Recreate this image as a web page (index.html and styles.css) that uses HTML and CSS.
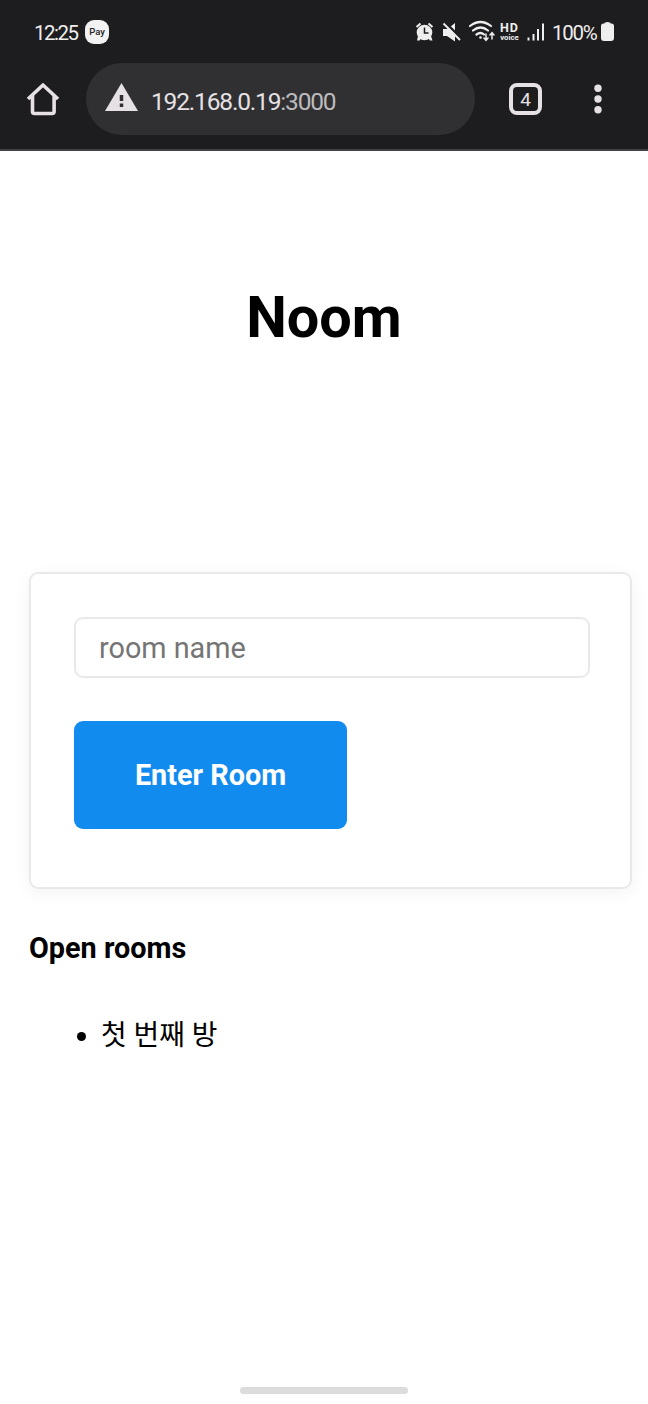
FILE: index.html
```html
<!DOCTYPE html>
<html lang="en">
<head>
<meta charset="utf-8">
<title>Noom</title>
<link rel="stylesheet" href="styles.css">
</head>
<body>
<div class="chrome">
  <div class="status">
    <span class="clock">12:25</span>
    <span class="pay">Pay</span>
    <svg class="status-icons" width="80" height="24" viewBox="415 20 80 24">
      <g fill="#efeeee">
        <circle cx="424.5" cy="32.500" r="7.800"/>
        <path d="M418 36l-1 4.500h2.500l2-2.500zM431 36l1.500 4.500h-2.500l-2-2.500z"/>
        <path d="M443 29h4.500l7.500-6v18.500l-8-5.500h-4z"/>
      </g>
      <path d="M416.500 27l4-3.500M432.500 27l-4-3.500" stroke="#efeeee" stroke-width="2"/>
      <path d="M424.500 27.500v5.500h4" fill="none" stroke="#1d1d1f" stroke-width="1.500"/>
      <path d="M445.500 23l17 16.500" stroke="#1d1d1f" stroke-width="2.500"/>
      <path d="M443.500 23.500l16.500 16.500" stroke="#efeeee" stroke-width="2"/>
      <g fill="none" stroke="#efeeee" stroke-width="2.200" stroke-linecap="round">
        <path d="M470 26q10.500-8 21 0M473 30.500q7.500-6 15 0M476.500 34.500q4-3 7.500 0"/>
        <path d="M486 34v6M484 38l2 2.300 2-2.300M492 39v-6M490 35l2-2.300 2 2.300" stroke-width="1.500"/>
      </g>
      <circle cx="480.500" cy="37.500" r="1.300" fill="#efeeee"/>
    </svg>
    <span class="hd"><b>HD</b><small>voice</small></span>
    <svg class="signal" width="18" height="20" viewBox="0 0 18 20"><path d="M1.500 15.500v3M6.500 12v6.500M11 7v11.500M16 1.500v17" stroke="#efeeee" stroke-width="2"/></svg>
    <span class="percent">100%</span>
    <svg class="battery" width="13" height="20" viewBox="0 0 13 20"><path d="M3.500 1.500q0-1.500 3-1.500t3 1.500h1q2.500 0 2.500 2.500v12q0 3-3 3h-7q-3 0-3-3v-12q0-2.500 2.500-2.500z" fill="#efeeee"/></svg>
  </div>
  <div class="toolbar">
    <svg class="home" width="34" height="34" viewBox="0 0 34 34"><path d="M2 17L17 3 32 17M6.500 13.500v16q0 2 2 2h17.600q2 0 2-2v-16" fill="none" stroke="#e6e1e5" stroke-width="3.600" stroke-linejoin="round"/></svg>
    <div class="address">
      <svg width="33" height="28" viewBox="0 0 33 28"><path d="M16.500 0L33 28H0z" fill="#e6e1e5"/><path d="M16.500 12v6M16.500 20.500v3.500" stroke="#303032" stroke-width="3.500"/></svg>
      <span class="url">192.168.0.19<span class="port">:3000</span></span>
    </div>
    <div class="tabs">4</div>
    <svg class="more" width="8" height="30" viewBox="0 0 8 30"><g fill="#e6e1e5"><circle cx="4" cy="4.200" r="3.700"/><circle cx="4" cy="15" r="3.700"/><circle cx="4" cy="25.800" r="3.700"/></g></svg>
  </div>
</div>
<header class="title"><h1>Noom</h1></header>
<main>
  <form class="card">
    <input class="room-name" type="text" placeholder="room name">
    <button class="enter" type="button">Enter Room</button>
  </form>
  <h4 class="subtitle">Open rooms</h4>
  <ul class="rooms"><li>첫 번째 방</li></ul>
</main>
<footer class="gesture"><div class="handle"></div></footer>
</body>
</html>
```
FILE: styles.css
```css
* { box-sizing: border-box; }
body {
  margin: 0;
  height: 1404px;
  display: flex;
  flex-direction: column;
  background: #fff;
  color: #000;
  font-family: Roboto, "Noto Sans CJK KR", sans-serif;
  font-size: 28.8px;
  overflow: hidden;
}
.chrome {
  height: 151px;
  background: #1d1d1f;
  border-bottom: 2px solid #444146;
  color: #e6e1e5;
}
.status { height: 63px; padding: 1px 33px 0 34px; display: flex; align-items: center; color: #efeeee; }
.clock { width: 51px; padding-top: 1px; font-size: 20.5px; letter-spacing: -1.5px; }
.pay {
  width: 24px; height: 24px;
  border-radius: 9px;
  background: #f2f2f2;
  color: #222;
  font-size: 9.500px;
  font-weight: 500;
  line-height: 23px;
  text-align: center;
}
.status-icons { margin-left: 306px; }
.hd { width: 21px; margin-left: 4px; display: flex; flex-direction: column; align-items: center; }
.hd b { font-size: 12.500px; line-height: 12px; letter-spacing: 1px; }
.hd small { font-size: 7.800px; line-height: 8px; font-weight: 700; }
.signal { margin-left: 7px; }
.percent { width: 45px; margin-left: 7px; padding-top: 1px; font-size: 20.5px; letter-spacing: -1.3px; }
.battery { margin-left: 4px; }
.toolbar { height: 72px; padding-left: 26px; display: flex; align-items: center; }
.address {
  width: 389px; height: 72px;
  margin-left: 26px;
  padding: 0 19px;
  border-radius: 36px;
  background: #303032;
  display: flex;
  align-items: center;
  gap: 13px;
}
.address svg { margin-bottom: 4px; }
.url { padding-top: 5px; font-size: 24.500px; letter-spacing: -1.170px; white-space: nowrap; }
.port { color: #bdbabd; }
.tabs {
  width: 33px; height: 32px;
  margin-left: 34px;
  border: 4px solid #e6e1e5;
  border-radius: 8px;
  font-size: 19px;
  line-height: 25px;
  text-align: center;
}
.more { margin-left: 51.500px; }
.title { height: 421px; padding-top: 132px; text-align: center; }
h1 { margin: 0; font-size: 57.600px; line-height: 69px; font-weight: 700; }
main { padding: 0 16px 0 29px; }
.card {
  height: 317px;
  padding: 43px 40px 0 43px;
  border: 2px solid #e9e9e9;
  border-radius: 9px;
  box-shadow: 0 4px 18px rgba(0, 0, 0, .05);
  display: flex;
  flex-direction: column;
  align-items: flex-start;
}
.room-name {
  width: 516px; height: 61px;
  margin: 0;
  padding: 0 23px;
  border: 2px solid #e9e9e9;
  border-radius: 9px;
  font: inherit;
  outline: none;
}
.room-name::placeholder { color: #757575; }
.enter {
  width: 273px; height: 108px;
  margin-top: 43px;
  padding: 0;
  border: 0;
  border-radius: 9px;
  background: #118bee;
  color: #fff;
  font: 700 28.800px Roboto, sans-serif;
}
.subtitle { margin: 38px 0 0; line-height: 43px; font-weight: 700; }
.rooms { margin: 44px 0 0; padding-left: 72px; line-height: 43px; font-size: 27.900px; }
.gesture { margin-top: auto; height: 17px; display: flex; justify-content: center; }
.handle { width: 168px; height: 7px; border-radius: 4px; background: #dcdcdc; }
```
